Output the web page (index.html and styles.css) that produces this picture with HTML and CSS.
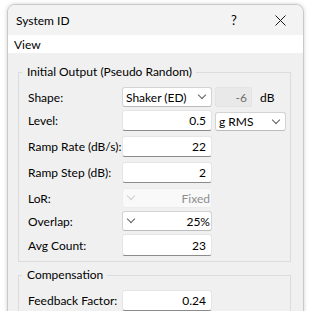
FILE: index.html
```html
<!DOCTYPE html>
<html lang="en">
<head>
 <meta charset="UTF-8" />
 <title>System ID</title>
 <link rel="stylesheet" href="styles.css">
</head>
<body>
 <div class="window">
   <div class="titlebar">
     <span class="title">System ID</span>
     <div class="caption">
       <span class="cap-btn">?</span>
       <span class="cap-btn">
         <svg width="11" height="11" viewBox="0 0 11 11"><path d="M0.5 0.5 L10.5 10.5 M10.5 0.5 L0.5 10.5" stroke="#1a1a1a" stroke-width="1"/></svg>
       </span>
     </div>
   </div>
   <div class="menubar"><span class="menu-item">View</span></div>

   <div class="client">
     <fieldset class="group">
       <legend>Initial Output (Pseudo Random)</legend>

       <div class="row short">
         <span class="label">Shape:</span>
         <div class="combo"><span class="combo-text">Shaker (ED)</span><span class="chev"></span></div>
         <div class="readonly">-6</div>
         <span class="unit">dB</span>
       </div>

       <div class="row">
         <span class="label">Level:</span>
         <div class="edit">0.5</div>
         <div class="combo units"><span class="combo-text">g RMS</span><span class="chev"></span></div>
       </div>

       <div class="row">
         <span class="label">Ramp Rate (dB/s):</span>
         <div class="edit">22</div>
       </div>

       <div class="row">
         <span class="label">Ramp Step (dB):</span>
         <div class="edit">2</div>
       </div>

       <div class="row short">
         <span class="label">LoR:</span>
         <div class="combo rtl disabled"><span class="chev"></span><span class="combo-text">Fixed</span></div>
       </div>

       <div class="row short">
         <span class="label">Overlap:</span>
         <div class="combo rtl"><span class="chev"></span><span class="combo-text">25%</span></div>
       </div>

       <div class="row last">
         <span class="label">Avg Count:</span>
         <div class="edit">23</div>
       </div>
     </fieldset>

     <fieldset class="group">
       <legend>Compensation</legend>
       <div class="row">
         <span class="label">Feedback Factor:</span>
         <div class="edit">0.24</div>
       </div>
     </fieldset>
   </div>
 </div>
</body>
</html>
```

FILE: styles.css
```css
html, body {
  margin: 0;
  background: #ffffff;
  overflow: hidden;
}

body {
  font-family: 'Lato', 'Segoe UI', sans-serif;
  font-size: 12px;
  color: #000;
  padding: 4px 0 0 7px;
}

.window {
  width: 295px;
  height: 330px;
  background: #f0f0f0;
  border: 1px solid #c9c9c9;
  border-radius: 8px 8px 0 0;
  box-shadow: 0 0 4px rgba(0,0,0,0.18);
  overflow: hidden;
}

.titlebar {
  height: 30px;
  background: #f3f3f3;
  display: flex;
  align-items: center;
  justify-content: space-between;
}

.title {
  padding-left: 8px;
}

.caption {
  display: flex;
  height: 100%;
}

.cap-btn {
  width: 46px;
  display: flex;
  align-items: center;
  justify-content: center;
  font-size: 13px;
}

.menubar {
  height: 18px;
  background: #ffffff;
  display: flex;
  align-items: center;
}

.menu-item {
  padding-left: 6px;
}

.client {
  padding: 11px 0 0 10px;
}

.group {
  width: 273px;
  margin: 0 0 5px 0;
  padding: 7px 0 5px 9px;
  border: 1px solid #dcdcdc;
  box-sizing: border-box;
}

.group legend {
  padding: 0 4px 0 5px;
  margin-left: -6px;
  line-height: 16px;
}

.row {
  display: flex;
  align-items: center;
  height: 21px;
  margin-bottom: 5px;
  white-space: nowrap;
}

.row.short {
  height: 20px;
  margin-bottom: 3px;
}

.row.last {
  height: 22px;
  margin-bottom: 0;
}

.label {
  width: 94px;
  flex-shrink: 0;
}

.edit {
  width: 90px;
  height: 100%;
  box-sizing: border-box;
  background: #fff;
  border: 1px solid #e5e5e5;
  border-bottom: 1px solid #8b8b8b;
  border-radius: 3px;
  padding-right: 5px;
  display: flex;
  align-items: center;
  justify-content: flex-end;
}

.combo {
  width: 90px;
  height: 20px;
  box-sizing: border-box;
  background: #fff;
  border: 1px solid #d3d3d3;
  border-bottom-color: #bcbcbc;
  border-radius: 3px;
  display: flex;
  align-items: center;
  justify-content: space-between;
  padding: 0 6px 0 3px;
}

.combo.units {
  width: 71px;
  height: 19px;
  margin-left: 3px;
  margin-top: 2px;
}

.combo.rtl {
  padding: 0 1px 0 5px;
}

.combo.disabled {
  background: #f9f9f9;
  border-color: #ececec;
  color: #8d8d8d;
}

.chev {
  width: 5px;
  height: 5px;
  border-right: 1px solid #5f5f5f;
  border-bottom: 1px solid #5f5f5f;
  transform: translateY(-2px) rotate(45deg);
}

.combo.disabled .chev {
  border-color: #cdcdcd;
}

.readonly {
  width: 37px;
  height: 20px;
  box-sizing: border-box;
  margin-left: 3px;
  background: #e9e9e9;
  border: 1px solid #e4e4e4;
  border-radius: 2px;
  color: #6f6f6f;
  display: flex;
  align-items: center;
  justify-content: flex-end;
  padding-right: 4px;
}

.unit {
  margin-left: 8px;
}
```
